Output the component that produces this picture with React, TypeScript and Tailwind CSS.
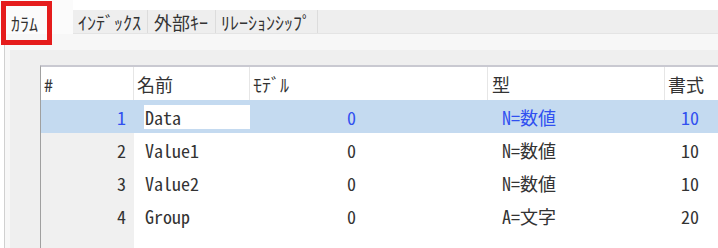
import React from "react";

const MONO = '"Noto Sans Mono CJK JP", "Noto Sans CJK JP", monospace';

type Row = { n: string; name: string; model: string; type: string; fmt: string };
const rows: Row[] = [
  { n: "1", name: "Data", model: "0", type: "N=数値", fmt: "10" },
  { n: "2", name: "Value1", model: "0", type: "N=数値", fmt: "10" },
  { n: "3", name: "Value2", model: "0", type: "N=数値", fmt: "10" },
  { n: "4", name: "Group", model: "0", type: "A=文字", fmt: "20" },
];

export default function App() {
  return (
    <div
      className="w-[718px] h-[248px] bg-white overflow-hidden relative flex flex-col text-[18px] leading-none text-[#333] font-light"
      style={{ fontFamily: MONO }}
    >
      {/* tab strip */}
      <div className="flex h-[34px] shrink-0">
        <div className="w-[73px] h-[34px] bg-[#fbfbfb] relative">
          <span className="absolute left-[11px] top-[14px]">ｶﾗﾑ</span>
          <div className="absolute left-[1px] top-[1px] w-[51px] h-[44px] border-[5px] border-[#e51c1c] z-10" />
        </div>
        <div className="flex-1 mt-[10px] h-[24px] bg-[#eeeeee] border-b border-[#e4e4e4] flex">
          <div className="px-[5px] flex items-center border-r border-[#dcdcdc] w-[75px]">ｲﾝﾃﾞｯｸｽ</div>
          <div className="px-[6px] flex items-center border-r border-[#dcdcdc] w-[68px]">外部ｷｰ</div>
          <div className="px-[5px] flex items-center border-r border-[#dcdcdc] w-[102px]">ﾘﾚｰｼｮﾝｼｯﾌﾟ</div>
        </div>
      </div>

      {/* body */}
      <div className="flex-1 pl-[4px] flex">
        <div className="flex-1 border-l border-[#d0d0d0] bg-[#f7f7f7] pt-[16px] flex flex-col">
          <div className="flex-1 ml-[5px] bg-[#efefef] pt-[15px] pl-[30px] flex flex-col">
            <div className="flex-1 border-l border-t-2 border-l-[#a0a0a0] border-t-[#c9c9d1] flex flex-col">
              {/* header */}
              <div className="grid grid-cols-[93px_116px_238px_177px_1fr] h-[33px] bg-white">
                <div className="pl-[3px] flex items-center border-r border-[#e6e6e6]">#</div>
                <div className="pl-[3px] flex items-center border-r border-[#e6e6e6]">名前</div>
                <div className="pl-[3px] flex items-center border-r border-[#e6e6e6]">ﾓﾃﾞﾙ</div>
                <div className="pl-[4px] flex items-center border-r border-[#e6e6e6]">型</div>
                <div className="pl-[3px] flex items-center">書式</div>
              </div>
              {/* rows */}
              {rows.map((r, i) => {
                const sel = i === 0;
                return (
                  <div
                    key={r.n}
                    className={
                      sel
                        ? "grid grid-cols-[93px_116px_238px_177px_1fr] h-[33px] bg-[#c4daf0] text-[#3050f0]"
                        : "grid grid-cols-[93px_116px_238px_177px_1fr] h-[33px] bg-white text-[#333]"
                    }
                  >
                    <div
                      className={
                        sel
                          ? "flex items-center justify-end pr-[8px]"
                          : "flex items-center justify-end pr-[8px] bg-[#f0f0f0]"
                      }
                    >
                      {r.n}
                    </div>
                    <div className="flex items-center pl-[10px]">
                      {sel ? (
                        <div className="w-[106px] h-[24px] bg-white text-[#333] flex items-center pl-[1px]">
                          {r.name}
                        </div>
                      ) : (
                        <span className="pl-[1px]">{r.name}</span>
                      )}
                    </div>
                    <div className="flex items-center pl-[97px]">{r.model}</div>
                    <div className="flex items-center pl-[14px]">{r.type}</div>
                    <div className="flex items-center pl-[16px]">{r.fmt}</div>
                  </div>
                );
              })}
              <div className="flex-1 grid grid-cols-[93px_1fr]">
                <div className="bg-[#f0f0f0]" />
                <div className="bg-white" />
              </div>
            </div>
          </div>
        </div>
      </div>
    </div>
  );
}
